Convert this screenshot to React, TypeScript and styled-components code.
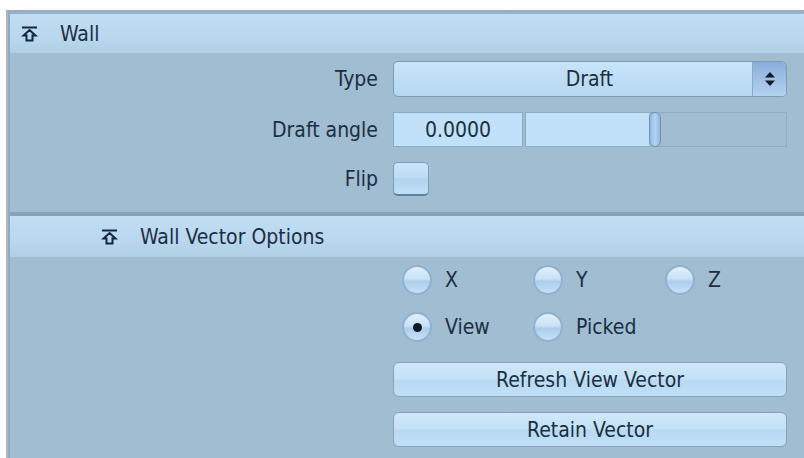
import React from 'react';
import styled, { createGlobalStyle } from 'styled-components';

const GlobalStyle = createGlobalStyle`
  html, body {
    margin: 0;
    background: #ffffff;
  }
  body {
    font-family: "DejaVu Sans Condensed", "DejaVu Sans", "Liberation Sans", sans-serif;
    font-size: 21px;
    color: #1b2f42;
  }
`

const Page = styled.div`
  width: 804px;
  height: 458px;
  padding: 10px 0 0 6px;
  box-sizing: border-box;
  overflow: hidden;
`

const Panel = styled.div`
  height: 100%;
  border-top: 2px solid #a9a9a9;
  border-left: 2px solid #b6b6b6;
  box-sizing: border-box;
`

const PanelInner = styled.div`
  height: 100%;
  border-left: 2px solid #8eabc2;
  background: #a1bdd1;
`

const SectionHeader = styled.div<{ $indent?: number }>`
  display: flex;
  align-items: center;
  gap: 22px;
  height: ${p => (p.$indent ? 41 : 39)}px;
  padding-left: ${p => 11 + (p.$indent || 0)}px;
  background: linear-gradient(#c0ddf3, #b9d7ee 60%, #b0cfe5);
  border-top: ${p => (p.$indent ? '4px solid #88a3b8' : '2px solid #8fb4d6')};
`

const SectionBody = styled.div<{ $bottom?: number }>`
  display: grid;
  grid-template-columns: 368px 1fr;
  column-gap: 15px;
  row-gap: 15px;
  padding: 8px 17px ${p => p.$bottom ?? 15}px 0;
  align-items: center;
`

const Label = styled.div`
  text-align: right;
  line-height: 24px;
`

const Select = styled.div`
  display: flex;
  height: 36px;
  box-sizing: border-box;
  border: 1px solid #7f9cb3;
  border-radius: 5px;
  background: linear-gradient(#c7e4f9, #bedef6 50%, #b7d7f1);
  overflow: hidden;
`

const SelectValue = styled.div`
  flex: 1;
  display: flex;
  align-items: center;
  justify-content: center;
  padding-left: 33px;
`

const SelectArrow = styled.div`
  width: 33px;
  display: flex;
  align-items: center;
  justify-content: center;
  border-left: 1px solid #8aa9c4;
  background: linear-gradient(#8aaedb, #9fc0e6 50%, #b3d2ef);
`

const DraftRow = styled.div`
  display: flex;
  gap: 2px;
  height: 35px;
`

const NumberField = styled.div`
  width: 130px;
  box-sizing: border-box;
  border: 1px solid #8fabc1;
  background: #c0e1f9;
  display: flex;
  align-items: center;
  justify-content: center;
`

const SliderTrack = styled.div`
  flex: 1;
  display: flex;
  box-sizing: border-box;
  border: 1px solid #91adc3;
`

const SliderFill = styled.div`
  background: #c0e1f9;
`

const SliderThumb = styled.div`
  width: 12px;
  margin: -1px 0;
  box-sizing: border-box;
  border: 1px solid #6f92b5;
  border-radius: 6px;
  background: linear-gradient(90deg, #93b8e0, #b4d3f1 50%, #93b8e0);
`

const CheckBox = styled.div`
  width: 36px;
  height: 34px;
  box-sizing: border-box;
  border: 1px solid #7b9db9;
  border-bottom: 2px solid #5f7f9a;
  border-radius: 5px;
  background: linear-gradient(#c6e3f9 0%, #bddcf5 46%, #b2d3ee 52%, #c0e0f8 100%);
`

const RadioGrid = styled.div`
  display: grid;
  grid-template-columns: 131px 132px auto;
  grid-auto-rows: 30px;
  row-gap: 17px;
  padding-left: 9px;
  margin-bottom: 20px;
`

const RadioOption = styled.div`
  display: flex;
  align-items: center;
  gap: 13px;
`

const RadioDot = styled.div<{ $checked?: boolean }>`
  width: 30px;
  height: 30px;
  box-sizing: border-box;
  border-radius: 50%;
  border: 2px solid #8fb0cf;
  background: linear-gradient(#e0f0fc, #c8e2f6 45%, #adcdea 55%, #c4e1f7);
  display: flex;
  align-items: center;
  justify-content: center;

  &::after {
    content: '';
    display: ${p => (p.$checked ? 'block' : 'none')};
    width: 9px;
    height: 9px;
    border-radius: 50%;
    background: #0d1a26;
  }
`

const ButtonStack = styled.div`
  display: flex;
  flex-direction: column;
  gap: 15px;
`

const Button = styled.div`
  height: 35px;
  box-sizing: border-box;
  border: 1px solid #87a2b8;
  border-radius: 6px;
  background: linear-gradient(#cfe7f8, #c4e1f7 48%, #b9d9f2 52%, #c0e0f8);
  display: flex;
  align-items: center;
  justify-content: center;
`

const CollapseIcon = () => (
  <svg width="17" height="16" viewBox="0 0 17 16">
    <path d="M1 1.5 H16" stroke="#15273a" strokeWidth="2" fill="none" />
    <path
      d="M8.5 4 L14.5 9.5 H11.5 V14.5 H5.5 V9.5 H2.5 Z"
      stroke="#15273a"
      strokeWidth="2"
      strokeLinejoin="miter"
      fill="none"
    />
  </svg>
)

const UpDownIcon = () => (
  <svg width="12" height="16" viewBox="0 0 12 16">
    <path d="M6 1 L11 6.5 H1 Z" fill="#0f1b27" />
    <path d="M6 15 L11 9.5 H1 Z" fill="#0f1b27" />
  </svg>
)

const Slider = ({ value, max }: { value: number; max: number }) => (
  <SliderTrack>
    <SliderFill style={{ width: `${(value / max) * 100}%` }} />
    <SliderThumb />
  </SliderTrack>
)

const App = () => {
  return (
    <Page>
      <GlobalStyle />
      <Panel>
        <PanelInner>
          <SectionHeader>
            <CollapseIcon />
            <span>Wall</span>
          </SectionHeader>
          <SectionBody $bottom={16}>
            <Label>Type</Label>
            <Select>
              <SelectValue>Draft</SelectValue>
              <SelectArrow>
                <UpDownIcon />
              </SelectArrow>
            </Select>

            <Label>Draft angle</Label>
            <DraftRow>
              <NumberField>0.0000</NumberField>
              <Slider value={47.3} max={100} />
            </DraftRow>

            <Label>Flip</Label>
            <CheckBox />
          </SectionBody>

          <SectionHeader $indent={80}>
            <CollapseIcon />
            <span>Wall Vector Options</span>
          </SectionHeader>
          <SectionBody $bottom={0}>
            <div />
            <div>
              <RadioGrid>
                <RadioOption><RadioDot /><span>X</span></RadioOption>
                <RadioOption><RadioDot /><span>Y</span></RadioOption>
                <RadioOption><RadioDot /><span>Z</span></RadioOption>
                <RadioOption><RadioDot $checked /><span>View</span></RadioOption>
                <RadioOption><RadioDot /><span>Picked</span></RadioOption>
              </RadioGrid>
              <ButtonStack>
                <Button>Refresh View Vector</Button>
                <Button>Retain Vector</Button>
              </ButtonStack>
            </div>
          </SectionBody>
        </PanelInner>
      </Panel>
    </Page>
  );
};

export default App
